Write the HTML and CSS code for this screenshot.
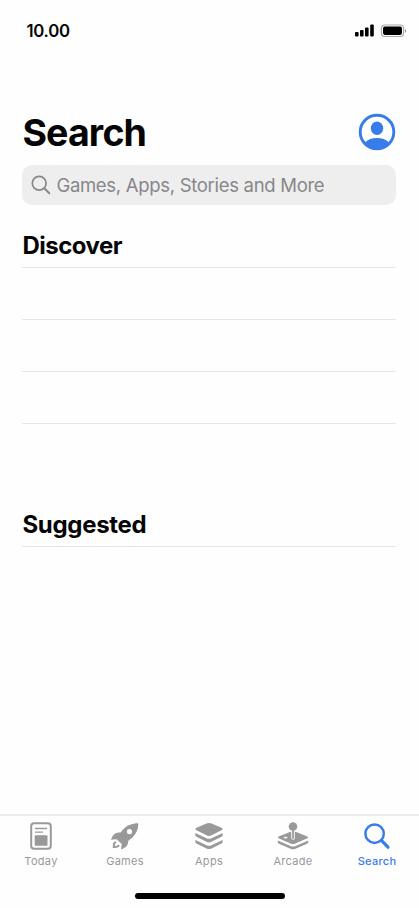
FILE: index.html
```html
<!DOCTYPE html>
<html lang="en">
<head>
<meta charset="utf-8">
<meta name="viewport" content="width=device-width, initial-scale=1">
<title>Search</title>
<link rel="stylesheet" href="styles.css">
</head>
<body>
<div class="screen">
  <header class="status">
    <span class="time">10.00</span>
    <svg class="status-icons" width="54" height="16" viewBox="0 0 54 16">
      <rect x="1" y="9" width="3.6" height="4.5" rx="1"/>
      <rect x="6" y="7" width="3.6" height="6.5" rx="1"/>
      <rect x="11" y="4.5" width="3.6" height="9" rx="1"/>
      <rect x="16.2" y="1.5" width="3.6" height="12" rx="1"/>
      <rect x="27.4" y="2" width="22.2" height="11.5" rx="3.4" fill="none" stroke="#aaa" stroke-width="1.2"/>
      <rect x="29" y="3.6" width="19" height="8.3" rx="1.8"/>
      <path d="M51 6c1.6.7 1.6 3 0 3.7z" fill="#999"/>
    </svg>
  </header>

  <main class="content">
    <div class="title-row">
      <h1 class="title">Search</h1>
      <svg class="avatar" width="38" height="38" viewBox="0 0 38 38">
        <circle cx="19" cy="19" r="16.8" fill="none" stroke="#387cec" stroke-width="2.9"/>
        <ellipse cx="19" cy="15.2" rx="6.2" ry="6.8" fill="#387cec"/>
        <path d="M7 29.4Q11.5 25 19 25T31 29.4Q26.5 36 19 36T7 29.4Z" fill="#387cec"/>
      </svg>
    </div>
    <div class="field">
      <svg class="field-icon" width="20" height="20" viewBox="0 0 20 20" fill="none" stroke="#87878a" stroke-linecap="round">
        <circle cx="8.2" cy="8.2" r="6.9" stroke-width="1.7"/>
        <path d="M13.3 13.3L18.3 18.2" stroke-width="2"/>
      </svg>
      <span class="placeholder">Games, Apps, Stories and More</span>
    </div>

    <section class="discover">
      <h2 class="heading">Discover</h2>
      <ul class="rows">
        <li class="row"></li>
        <li class="row"></li>
        <li class="row"></li>
        <li class="row"></li>
      </ul>
    </section>
    <section class="suggested">
      <h2 class="heading heading-wide">Suggested</h2>
      <div class="row"></div>
    </section>
  </main>

  <nav class="tabs">
    <a class="tab">
      <svg width="34" height="30" viewBox="0 0 34 30">
        <rect x="7.2" y="2.2" width="19.6" height="25.6" rx="3" fill="none" stroke="currentColor" stroke-width="2"/>
        <path d="M11 7.5H23M11 11.1H19" stroke="currentColor" stroke-width="1.3"/>
        <rect x="10.7" y="14.2" width="12.8" height="10.5" rx="1" fill="currentColor"/>
      </svg>
      <span class="label">Today</span>
    </a>
    <a class="tab">
      <svg width="34" height="30" viewBox="0 0 34 30" fill="currentColor">
        <path fill-rule="evenodd" d="M30.3 2.2C24 2.2 18.4 4.3 14.6 9.1L12.6 11.6C9 11 6 12.5 4.2 15.8L3 18.7L8.6 18.2L13.7 23L13 28.3C16.5 27.5 20.5 24.8 20.2 20L23.5 17.3C28.2 13.2 30.4 8.2 30.3 2.2ZM21.5 8a2.6 2.6 0 1 1 0 5.2a2.6 2.6 0 1 1 0-5.2Z"/>
        <path d="M8 21.2C6.3 21.5 5.6 23.5 5.8 26C8.3 26.2 10.3 25.8 10.8 24" fill="none" stroke="currentColor" stroke-width="2"/>
      </svg>
      <span class="label">Games</span>
    </a>
    <a class="tab">
      <svg width="34" height="30" viewBox="0 0 34 30" fill="currentColor">
        <path d="M14.5 2.4Q17 1.4 19.5 2.4L30 7Q31.4 8 30 9L19.5 14.3Q17 15.5 14.5 14.3L4 9Q2.6 8 4 7Z"/>
        <path d="M3.3 12L14.5 17.3Q17 18.4 19.5 17.3L30.7 12V14Q30.7 15 29.5 15.7L19.5 20.8Q17 22 14.5 20.8L4.5 15.7Q3.3 15 3.3 14Z"/>
        <path d="M3.3 19L14.5 24.3Q17 25.4 19.5 24.3L30.7 19V20.7Q30.7 21.7 29.5 22.4L19.5 27.5Q17 28.7 14.5 27.5L4.5 22.4Q3.3 21.7 3.3 20.7Z"/>
      </svg>
      <span class="label">Apps</span>
    </a>
    <a class="tab">
      <svg width="34" height="30" viewBox="0 0 34 30" fill="currentColor">
        <path d="M14.5 10.7L2.6 15.4Q1.2 16.3 2.6 17.2L14.5 22.5Q17 23.5 19.5 22.5L31.4 17.2Q32.8 16.3 31.4 15.4L19.5 10.7Z"/>
        <path d="M1.7 19.6L14.5 24.9Q17 25.9 19.5 24.9L32.3 19.6V21.3Q32.3 22 31 22.7L19.5 27.7Q17 28.7 14.5 27.7L3 22.7Q1.7 22 1.7 21.3Z"/>
        <ellipse cx="9.6" cy="16.6" rx="1.9" ry=".9" fill="#fff"/>
        <path d="M17 9.5V17" stroke="#fff" stroke-width="3.6" stroke-linecap="round"/>
        <path d="M17 6V17" stroke="currentColor" stroke-width="1.8" stroke-linecap="round"/>
        <circle cx="17" cy="5.5" r="4.3"/>
      </svg>
      <span class="label">Arcade</span>
    </a>
    <a class="tab active">
      <svg width="34" height="30" viewBox="0 0 34 30" fill="none" stroke="currentColor" stroke-linecap="round">
        <circle cx="14.6" cy="12.7" r="9.2" stroke-width="2.5"/>
        <path d="M21.6 19.7L28 26.2" stroke-width="3.2"/>
      </svg>
      <span class="label">Search</span>
    </a>
  </nav>
  <div class="home"></div>
</div>
</body>
</html>
```
FILE: styles.css
```css
* { box-sizing: border-box; }

body {
  margin: 0;
  background: #fefefe;
  color: #050505;
  font-family: Inter, "Liberation Sans", sans-serif;
}

.screen {
  display: flex;
  flex-direction: column;
  height: 908px;
  overflow: hidden;
}

svg { display: block; flex: none; }

.status {
  display: flex;
  justify-content: space-between;
  align-items: center;
  height: 62px;
  padding: 0 11px 0 26.5px;
}

.time {
  font-size: 16.8px;
  font-weight: 600;
  line-height: 20px;
  letter-spacing: -0.3px;
}

.content {
  flex: 1;
  padding: 46px 22.6px 0 22.4px;
}

.title-row {
  display: flex;
  justify-content: space-between;
  align-items: center;
  height: 48px;
}

.avatar { margin-right: 0.4px; }

.title {
  margin: 0;
  padding-top: 1px;
  font-size: 37.5px;
  font-weight: 700;
  line-height: 48px;
  letter-spacing: -0.85px;
}

.field {
  display: flex;
  align-items: center;
  height: 40px;
  margin-top: 8.5px;
  padding-left: 8.3px;
  border-radius: 10px;
  background: #eee;
}

.placeholder {
  margin-left: 5.7px;
  color: #87878a;
  font-size: 18.5px;
  line-height: 24px;
  letter-spacing: -0.3px;
  white-space: nowrap;
}

.discover { height: 279.5px; padding-top: 25px; }
.suggested { padding-top: 25px; }

.heading {
  margin: 0;
  height: 37px;
  font-size: 24px;
  font-weight: 700;
  line-height: 32px;
  letter-spacing: -0.5px;
}

.heading-wide { letter-spacing: -0.3px; }

.rows { margin: 0; padding: 0; list-style: none; }

.row {
  height: 52px;
  border-top: 1px solid #e6e6e6;
}

.tabs {
  display: grid;
  grid-template-columns: repeat(5, 84px);
  height: 71px;
  margin-left: -1px;
  padding-top: 5px;
  border-top: 2px solid #ececec;
}

.tab {
  display: flex;
  flex-direction: column;
  align-items: center;
  color: #999;
}

.active { color: #387cec; }

.label {
  margin-top: 3px;
  font-size: 11px;
  font-weight: 400;
  line-height: 14px;
  letter-spacing: 0.3px;
}

.active .label { font-weight: 500; }

.home {
  width: 150px;
  height: 6px;
  margin: 8px 0 9px 135px;
  border-radius: 3px;
  background: #000;
}
```
